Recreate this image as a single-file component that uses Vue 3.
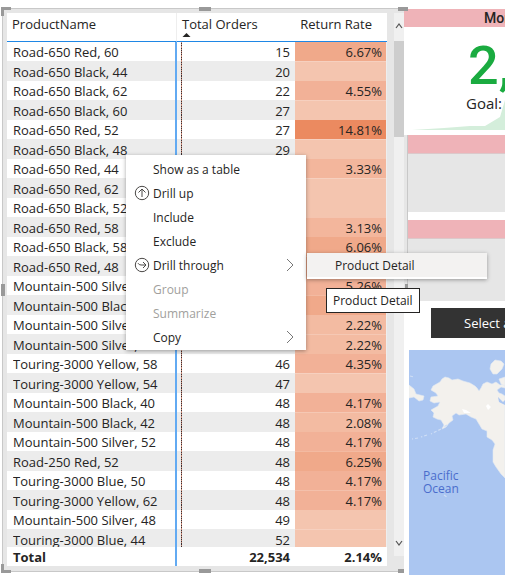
<script setup>
const rows = [
  ['Road-650 Red, 60', 15, '6.67%', 't4'],
  ['Road-650 Black, 44', 20, '', 't0'],
  ['Road-650 Black, 62', 22, '4.55%', 't3'],
  ['Road-650 Black, 60', 27, '', 't0'],
  ['Road-650 Red, 52', 27, '14.81%', 't5'],
  ['Road-650 Black, 48', 29, '', 't0'],
  ['Road-650 Red, 44', 30, '3.33%', 't2'],
  ['Road-650 Red, 62', 30, '', 't0'],
  ['Road-650 Black, 52', 32, '', 't0'],
  ['Road-650 Red, 58', 32, '3.13%', 't2'],
  ['Road-650 Black, 58', 33, '6.06%', 't4'],
  ['Road-650 Red, 48', 35, '5.71%', 't4'],
  ['Mountain-500 Silver, 42', 38, '5.26%', 't3'],
  ['Mountain-500 Black, 52', 43, '6.98%', 't4'],
  ['Mountain-500 Silver, 40', 45, '2.22%', 't1'],
  ['Mountain-500 Silver, 44', 45, '2.22%', 't1'],
  ['Touring-3000 Yellow, 58', 46, '4.35%', 't3'],
  ['Touring-3000 Yellow, 54', 47, '', 't0'],
  ['Mountain-500 Black, 40', 48, '4.17%', 't3'],
  ['Mountain-500 Black, 42', 48, '2.08%', 't1'],
  ['Mountain-500 Silver, 52', 48, '4.17%', 't3'],
  ['Road-250 Red, 52', 48, '6.25%', 't4'],
  ['Touring-3000 Blue, 50', 48, '4.17%', 't3'],
  ['Touring-3000 Yellow, 62', 48, '4.17%', 't3'],
  ['Mountain-500 Silver, 48', 49, '', 't0'],
  ['Touring-3000 Blue, 44', 52, '', 't0'],
]
const menu = [
  { label: 'Show as a table' },
  { label: 'Drill up', icon: 'up' },
  { label: 'Include' },
  { label: 'Exclude' },
  { label: 'Drill through', icon: 'through', sub: true },
  { label: 'Group', off: true },
  { label: 'Summarize', off: true },
  { label: 'Copy', sub: true },
]
const handles = ['nw', 'n', 'ne', 'w', 'e', 'sw', 's', 'se']
</script>

<template>
  <main class="report">
    <section class="visual">
      <div class="grid">
        <div class="viewport">
          <table>
            <colgroup><col class="c1"><col class="c2"><col></colgroup>
            <thead>
              <tr>
                <th>ProductName</th>
                <th class="sorted">Total Orders<svg class="sort" viewBox="0 0 10 5"><path d="M0 5 5 0l5 5z" fill="#252423" /></svg></th>
                <th class="rate-head">Return Rate</th>
              </tr>
            </thead>
            <tbody>
              <tr v-for="r in rows" :key="r[0]">
                <td class="name"><div class="cell">{{ r[0] }}</div></td>
                <td class="orders"><div class="cell">{{ r[1] }}</div></td>
                <td :class="['rate', r[3]]"><div class="cell">{{ r[2] }}</div></td>
              </tr>
            </tbody>
          </table>
        </div>
        <div class="total">
          <span class="total-name">Total</span><span class="total-orders">22,534</span><span class="total-rate">2.14%</span>
        </div>
      </div>
      <div class="scrollbar">
        <svg viewBox="0 0 10 28"><path d="M2 15l3-4 3 4" fill="none" stroke="#555" stroke-width="1.2" /></svg>
        <div class="thumb"></div>
        <svg class="down" viewBox="0 0 10 28"><path d="M2 13l3 4 3-4" fill="none" stroke="#555" stroke-width="1.2" /></svg>
      </div>
      <i v-for="h in handles" :key="h" :class="['handle', h]"></i>
    </section>

    <aside class="side">
      <section class="kpi">
        <h2>Monthly Orders</h2>
        <div class="kpi-body">
          <svg class="trend" viewBox="0 0 101 40" preserveAspectRatio="xMinYMax slice"><path d="M8 40 40 38 66 36H81L96 27 101 10V40z" fill="#d4eedb" /></svg>
          <strong>2,146</strong>
          <p>Goal: 2,165</p>
        </div>
      </section>
      <div class="cards">
        <section class="card first"><div class="band"></div></section>
        <section class="card second"><div class="band"></div></section>
      </div>
      <button class="select" type="button">Select all</button>
      <section class="map">
        <svg viewBox="0 0 96 225" preserveAspectRatio="xMinYMin slice">
          <rect width="96" height="225" fill="#abc6f1" />
          <g fill="#f3f1ed" stroke="#e3eaf2" stroke-width=".6">
            <path d="M96 46 93 44 90 43 88 40 92 37 96 38V34L91 35 87 32 83 34 78 32 74 34 72 38 70 41 68 38 66 36 61 33 54 31 49 29 43 30 40 28 36 27 33 29 31 32 24 36 22 40 27 43 29 46 22 47 21 51 25 53 31 52 29 56 22 60 25 63 24 67 28 69 32 70 35 75 33 79 37 77 40 73 44 70 43 66 47 63 50 65 57 64 62 67 67 69 70 74 73 79 78 81 78 87 83 90 86 94 84 100 84 112 87 117 92 124 96 128z" />
            <path d="M82 14 86 10 92 11 95 14 93 19 88 24 84 24 81 19z" />
            <path d="M90 29 96 27V36L92 34z" />
            <path d="M0 35 5 39 7 44 15 46 14 50 10 51 5 47 0 48z" />
          </g>
          <path d="M38 75 33 78M32 79 22 84M18 85 12 87M9 88 3 89M1 26 5 27M35 145l3 2" stroke="#cfdef5" stroke-width="1.2" stroke-dasharray="3 2" />
          <path d="M53 59 57 60 62 63 55 63zM77 56 79 54 82 57 79 60z" fill="#fff" />
          <path d="M89 47l5 5 2-2v5l-6-3z" fill="#abc6f1" />
        </svg>
        <span class="ocean">Pacific<br>Ocean</span>
      </section>
    </aside>

    <div class="menu" role="menu">
      <button v-for="m in menu" :key="m.label" type="button" role="menuitem" :disabled="m.off">
        <span class="icon">
          <svg v-if="m.icon" viewBox="0 0 16 16" fill="none" stroke="#4a4846" stroke-width="1">
            <circle cx="8" cy="8" r="6.7" />
            <path v-if="m.icon === 'up'" d="M8 12V4M4.5 7.500 8 4l3.500 3.500" />
            <path v-else d="M4 6.200Q5 8 7 8H12M9 5l3 3-3 3" />
          </svg>
        </span>
        <span class="label">{{ m.label }}</span>
        <svg v-if="m.sub" class="chev" viewBox="0 0 8 14"><path d="M1 1l6 6-6 6" fill="none" stroke="#777" /></svg>
      </button>
    </div>
    <div class="submenu" role="menu"><button type="button" role="menuitem">Product Detail</button></div>
    <div class="tip" role="tooltip">Product Detail</div>
  </main>
</template>

<style>
body { margin: 0; background: #fff; }
</style>

<style scoped>
* { box-sizing: border-box; }
.report { position: relative; display: grid; grid-template-columns: 4fr 1fr; padding-top: 8px; overflow: hidden; font-family: "Open Sans", "Noto Sans", sans-serif; color: #252423; }
button { font: inherit; color: inherit; border: 0; margin: 0; }
.visual { position: relative; display: flex; align-self: start; margin-left: 2px; padding: 4px 0 5px 4px; background: #e6e6e6; border: solid #c8c8c8; border-width: 1px 0 1px 1px; }
.grid { flex: 1; background: #fff; min-width: 0; }
.viewport { height: 534px; overflow: hidden; }
table { width: 100%; table-layout: fixed; border-collapse: separate; border-spacing: 0; font-size: 13px; }
.c1 { width: 170px; }
.c2 { width: 118px; }
th { height: 29px; padding: 0 5px; font-weight: 400; text-align: left; vertical-align: top; line-height: 22px; border-bottom: 1px solid #1f87e5; white-space: nowrap; }
th:first-child { border-right: 1px solid #eee; }
.sorted { position: relative; }
.sort { position: absolute; left: 5px; top: 20px; width: 9px; height: 4px; }
.rate-head { padding-right: 15px; text-align: right; }
td { padding: 0; }
.cell { height: 19px; padding-top: 1px; line-height: 19px; white-space: nowrap; overflow: hidden; }
tbody tr:nth-child(even) .cell { height: 20px; padding-top: 2px; }
tbody tr:nth-child(even) { background: #ececec; }
.name { padding-left: 6px; border-right: 2px solid #62aaf2; }
.orders { text-align: right; padding: 0 5px 0 4px; }
.orders .cell { border-left: 1px solid; border-image: repeating-linear-gradient(#3a3030 0 1px, #c98a78 1px 2px) 1; }
.rate { text-align: right; padding-right: 4px; border-right: 1px solid #eee; }
tbody tr:nth-child(even) .rate { box-shadow: inset 0 1px rgba(255, 255, 255, .2); }
.t0 { background: #f4c5af; }
.t1 { background: #f3bba2; }
.t2 { background: #f3b69c; }
.t3 { background: #f2b197; }
.t4 { background: #f0a98a; }
.t5 { background: #eb8a60; }
.total { display: flex; height: 19px; line-height: 20px; font-size: 13px; font-weight: 700; }
.total-name { width: 170px; padding-left: 6px; border-right: 2px solid #62aaf2; }
.total-orders { width: 118px; padding-right: 5px; text-align: right; }
.total-rate { flex: 1; padding-right: 5px; text-align: right; }
.scrollbar { width: 10px; margin: 0 0 10px 7px; display: flex; flex-direction: column; background: #f0f0f0; }
.scrollbar svg { width: 10px; height: 28px; }
.thumb { height: 96px; background: #cdcdcd; }
.scrollbar .down { margin-top: auto; }
.handle { position: absolute; background: #999; width: 12px; height: 4px; }
.nw, .sw { left: -2px; width: 10px; height: 9px; background: none; border: solid #999; border-width: 3px 0 0 3px; }
.nw { top: -2px; }
.sw { bottom: -2px; border-width: 0 0 3px 3px; }
.n { top: -2px; left: 196px; }
.ne { top: -2px; right: -4px; width: 10px; }
.w { left: -2px; top: 275px; width: 4px; height: 12px; }
.e { right: -4px; top: 275px; width: 3px; height: 12px; z-index: 1; }
.s { bottom: -2px; left: 196px; }
.se { bottom: -2px; right: 0; width: 6px; }
.side { min-width: 0; padding-top: 1px; }
.kpi h2 { margin: 0; height: 18px; padding-left: 80px; line-height: 18px; font-size: 14px; font-weight: 500; white-space: nowrap; overflow: hidden; background: #efb3b8; font-family: Roboto, sans-serif; }
.kpi-body { position: relative; height: 108px; background: #fff; overflow: hidden; white-space: nowrap; }
.trend { position: absolute; left: 0; bottom: 5px; width: 101px; height: 40px; }
.kpi strong { position: relative; display: block; padding: 12px 0 0 64px; font: 500 54px/54px Roboto, sans-serif; color: #1aab40; }
.kpi p { position: relative; margin: 0; padding-left: 62px; font-size: 15px; line-height: 20px; }
.cards { padding-left: 4px; background: #e6e6e6; box-shadow: inset 3px 0 #e6e6e6, inset 4px 0 #c8c8c8; }
.card { background: #e6e6e6; }
.band { height: 19px; background: #efb3b8; border-bottom: 1px solid #dcc8ca; }
.first { height: 85px; border-bottom: 8px solid #fff; }
.second { height: 81px; }
.select { display: block; width: calc(100% - 27px); height: 30px; margin: 7px 0 0 27px; padding: 0 0 0 33px; text-align: left; white-space: nowrap; overflow: hidden; background: #333; color: #fff; font-size: 13px; }
.map { position: relative; margin: 12px 0 0 5px; height: 225px; overflow: hidden; }
.map svg { display: block; width: 100%; height: 225px; }
.ocean { position: absolute; left: 14px; top: 119px; font-size: 12px; line-height: 13px; color: #4a6dcc; }
.menu { position: absolute; left: 126px; top: 155px; width: 180px; padding: 2px 0 1px; background: #fff; box-shadow: 0 1px 4px rgba(0, 0, 0, .35); font-size: 12px; }
.menu button { display: flex; align-items: center; width: 100%; height: 24px; padding: 0 12px 0 8px; background: none; text-align: left; }
.menu button:disabled { color: #a19f9d; }
.icon { width: 19px; height: 16px; }
.icon svg { display: block; width: 16px; height: 16px; }
.label { flex: 1; }
.chev { width: 8px; height: 14px; }
.submenu { position: absolute; left: 307px; top: 253px; width: 180px; padding-bottom: 2px; background: #fff; box-shadow: 0 1px 4px rgba(0, 0, 0, .35); z-index: 2; }
.submenu button { display: block; width: 100%; height: 24px; padding: 0 28px; text-align: left; background: #f3f2f1; font-size: 12px; }
.tip { position: absolute; left: 326px; top: 288px; padding: 0 6px; line-height: 23px; border: 1px solid #252423; background: #fff; font-size: 12px; z-index: 2; }
</style>
